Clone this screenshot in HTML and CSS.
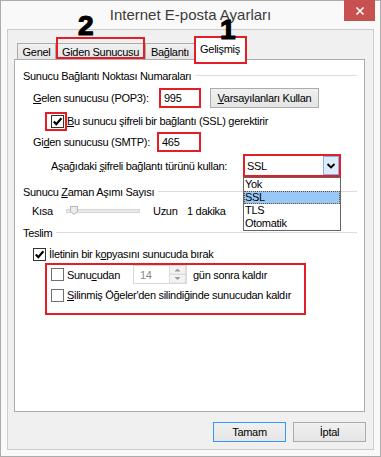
FILE: index.html
```html
<!DOCTYPE html>
<html lang="tr">

<head>
    <meta charset="UTF-8" />
    <title>Internet E-posta Ayarları</title>
    <link rel="stylesheet" href="styles.css">
</head>

<body>
    <div class="window">
        <div class="titlebar">
            <span class="title">Internet E-posta Ayarları</span>
            <span class="close">
                <svg width="10" height="10" viewBox="0 0 10 10"><path d="M1.5 1.5 L8.5 8.5 M8.5 1.5 L1.5 8.5" stroke="#fff" stroke-width="1.6" fill="none"/></svg>
            </span>
        </div>

        <div class="client">
            <div class="tabs">
                <div class="tab tab-genel">Genel</div>
                <div class="tab tab-giden">Giden Sunucusu</div>
                <div class="tab tab-baglanti">Bağlantı</div>
                <div class="tab tab-gelismis active">Gelişmiş</div>
            </div>

            <div class="panel">
                <div class="gtitle"><span>Sunucu Bağlantı Noktası Numaraları</span></div>

                <div class="row row-port">
                    <span class="lbl"><u>G</u>elen sunucusu (POP3):</span>
                    <span class="port">995</span>
                    <span class="btn btn-defaults"><span><u>V</u>arsayılanları Kullan</span></span>
                </div>

                <div class="row row-check">
                    <span class="cb checked cb-marked">
                        <svg width="11" height="11" viewBox="0 0 11 11"><path d="M1.8 5.6 L4.3 8.2 L9.4 2.2" stroke="#000" stroke-width="2.2" fill="none"/></svg>
                    </span>
                    <span class="cb-text"><u>B</u>u sunucu şifreli bir bağlantı (SSL) gerektirir</span>
                </div>

                <div class="row row-smtp">
                    <span class="lbl lbl-short">Gi<u>d</u>en sunucusu (SMTP):</span>
                    <span class="port port-wide">465</span>
                </div>

                <div class="row row-combo">
                    <span class="lbl lbl-combo">Aşağıdaki <u>ş</u>ifreli bağlantı türünü kullan:</span>
                    <span class="combo">
                        <span class="combo-val">SSL</span>
                        <span class="combo-btn">
                            <svg width="14" height="17" viewBox="0 0 14 17"><path d="M3.5 7 L7 10.5 L10.5 7" stroke="#000" stroke-width="1.8" fill="none"/></svg>
                        </span>
                        <span class="combo-list">
                            <span class="opt">Yok</span>
                            <span class="opt selected">SSL</span>
                            <span class="opt">TLS</span>
                            <span class="opt">Otomatik</span>
                        </span>
                    </span>
                </div>

                <div class="gtitle gtitle-2"><span>Sunucu <u>Z</u>aman Aşımı Sayısı</span></div>

                <div class="row row-slider">
                    <span class="kisa">Kısa</span>
                    <svg width="74" height="10" viewBox="0 0 74 10">
                        <rect x="0.5" y="3.5" width="73" height="3" fill="#e7eaea" stroke="#d6d6d6"/>
                        <polygon points="4.5,0.5 11.5,0.5 11.5,5.5 8,8.5 4.5,5.5" fill="#ececec" stroke="#b4b4b4"/>
                    </svg>
                    <span class="uzun">Uzun</span>
                    <span>1 dakika</span>
                </div>

                <div class="gtitle gtitle-3"><span>Teslim</span></div>

                <div class="row row-keep">
                    <span class="cb checked">
                        <svg width="11" height="11" viewBox="0 0 11 11"><path d="M1.8 5.6 L4.3 8.2 L9.4 2.2" stroke="#000" stroke-width="2.2" fill="none"/></svg>
                    </span>
                    <span class="cb-text">İletinin bir k<u>o</u>pyasını sunucuda bırak</span>
                </div>

                <div class="keep">
                    <div class="row sub-row">
                        <span class="cb"></span>
                        <span class="cb-text lbl-days">Sunu<u>c</u>udan</span>
                        <span class="spin">
                            <span class="spin-val">14</span>
                            <svg width="17" height="19" viewBox="0 0 17 19">
                                <rect x="0.5" y="0.5" width="16" height="8.5" fill="#f3f3f3" stroke="#dcdcdc"/>
                                <rect x="0.5" y="9.5" width="16" height="8.5" fill="#f3f3f3" stroke="#dcdcdc"/>
                                <polygon points="5.5,6.5 11.5,6.5 8.5,3.5" fill="#9a9a9a"/>
                                <polygon points="5.5,12 11.5,12 8.5,15" fill="#9a9a9a"/>
                            </svg>
                        </span>
                        <span class="days-after">gün sonra kaldır</span>
                    </div>
                    <div class="row sub-row-2">
                        <span class="cb"></span>
                        <span class="cb-text"><u>S</u>ilinmiş Öğeler'den silindiğinde sunucudan kaldır</span>
                    </div>
                </div>
            </div>

            <div class="buttons">
                <span class="btn btn-ok">Tamam</span>
                <span class="btn">İptal</span>
            </div>
        </div>

        <span class="num num-2">2</span>
        <span class="num num-1">1</span>
    </div>
</body>

</html>
```

FILE: styles.css
```css
body {
    margin: 0;
    font-family: "Liberation Sans", Arial, sans-serif;
    font-size: 11px;
    letter-spacing: -0.3px;
    color: #000;
}

u {
    text-decoration: underline;
    text-underline-offset: 1px;
}

/* Pencere */
.window {
    position: relative;
    width: 381px;
    height: 457px;
    box-sizing: border-box;
    border: 1px solid #acacac;
    background: #f9f9f9;
    display: flex;
    flex-direction: column;
}

.titlebar {
    height: 28px;
    flex: none;
    display: grid;
    grid-template-columns: 1fr auto 1fr;
    align-items: start;
}

.title {
    grid-column: 2;
    font-size: 15px;
    letter-spacing: 0;
    line-height: 28px;
    color: #3c3c3c;
}

.close {
    grid-column: 3;
    justify-self: end;
    margin: -1px 5px 0 0;
    width: 31px;
    height: 21px;
    background: #c75050;
    display: flex;
    align-items: center;
    justify-content: center;
}

.client {
    flex: 1;
    margin: 0 6px 6px;
    border: 1px solid #cbcbcb;
    background: #f0f0f0;
    padding: 0 7px 0 6px;
    display: flex;
    flex-direction: column;
}

/* Sekmeler */
.tabs {
    height: 29px;
    flex: none;
    display: flex;
    align-items: flex-end;
    padding-left: 3px;
}

.tab {
    position: relative;
    height: 16px;
    box-sizing: border-box;
    border: 1px solid #acacac;
    border-bottom: none;
    background: linear-gradient(#f0f0f0, #e5e5e5);
    display: flex;
    align-items: center;
    justify-content: center;
}

.tab + .tab {
    margin-left: -1px;
}

.tab-genel { width: 39px; }
.tab-giden { width: 91px; }
.tab-baglanti { width: 50px; }

.tab.active {
    width: 52px;
    height: 23px;
    margin-bottom: -1px;
    background: #fff;
    z-index: 1;
}

/* Kırmızı işaretler */
.tab-giden::after,
.tab-gelismis::after,
.cb-marked::after {
    content: "";
    position: absolute;
    border: 2px solid #e31e26;
}

.tab-giden::after {
    top: -7px;
    left: 0;
    right: 0;
    bottom: 0;
}

.tab-gelismis::after {
    top: -2px;
    left: -1px;
    right: -2px;
    bottom: -4px;
}

.cb-marked::after {
    top: -4px;
    left: -7px;
    right: -4px;
    bottom: -4px;
}

.num {
    position: absolute;
    font-size: 28px;
    font-weight: 900;
    line-height: 28px;
    letter-spacing: 0;
    color: #000;
    -webkit-text-stroke: 1.2px #000;
    z-index: 3;
}

.num-2 { left: 77px; top: 11px; }
.num-1 { left: 219px; top: 15px; }

/* Panel */
.panel {
    height: 353px;
    flex: none;
    box-sizing: border-box;
    margin-right: 1px;
    border: 1px solid #acacac;
    background: #fff;
    padding: 8px 7px 0 8px;
}

.gtitle {
    display: flex;
    align-items: center;
    height: 15px;
}

.gtitle::after {
    content: "";
    flex: 1;
    margin-left: 4px;
    border-top: 1px solid #dcdcdc;
}

.gtitle-2 { margin-top: 7px; }
.gtitle-3 { margin-top: 7px; }

.row {
    display: flex;
    align-items: center;
}

.row-port {
    height: 21px;
    margin-top: 4px;
    padding-left: 10px;
}

.lbl { width: 126px; flex: none; }
.lbl-short { width: 124px; }
.lbl-combo { width: 192px; }

.port {
    width: 42px;
    height: 20px;
    box-sizing: border-box;
    border: 2px solid #e31e26;
    padding-left: 3px;
    display: flex;
    align-items: center;
    background: #fff;
}

.port-wide { width: 44px; }

.btn {
    width: 73px;
    height: 20px;
    box-sizing: border-box;
    border: 1px solid #acacac;
    background: linear-gradient(#f0f0f0, #e5e5e5);
    display: flex;
    align-items: center;
    justify-content: center;
}

.btn-defaults {
    width: 109px;
    margin-left: 9px;
}

.btn-ok {
    border-color: #3399ff;
}

.row-check {
    height: 16px;
    margin-top: 5px;
    padding-left: 28px;
}

.row-smtp {
    height: 20px;
    margin-top: 3px;
    padding-left: 10px;
}

.row-combo {
    height: 23px;
    margin-top: 2px;
    padding-left: 28px;
}

/* Onay kutuları */
.cb {
    position: relative;
    width: 13px;
    height: 13px;
    flex: none;
    box-sizing: border-box;
    border: 1px solid #707070;
    background: #fff;
    display: flex;
}

.cb.checked {
    border-color: #333;
}

.cb-text {
    margin-left: 3px;
}

/* Açılır liste */
.combo {
    position: relative;
    width: 98px;
    height: 23px;
    box-sizing: border-box;
    border: 2px solid #e31e26;
    background: #fff;
    display: flex;
    align-items: center;
}

.combo-val {
    flex: 1;
    padding-left: 2px;
}

.combo-btn {
    width: 16px;
    height: 19px;
    box-sizing: border-box;
    border: 1px solid #7eb4ea;
    background: #dcecfc;
    display: flex;
    align-items: center;
    justify-content: center;
}

.combo-list {
    position: absolute;
    top: calc(100% + 2px);
    left: -2px;
    width: 98px;
    box-sizing: border-box;
    border: 1px solid #646464;
    background: #fff;
    display: flex;
    flex-direction: column;
    z-index: 2;
}

.opt {
    height: 13px;
    line-height: 13px;
    padding-left: 1px;
    box-sizing: border-box;
}

.opt.selected {
    background: #99c8f8;
    outline: 1px dotted #6b4f2a;
    outline-offset: -1px;
}

/* Zaman aşımı */
.row-slider {
    height: 15px;
    margin-top: 4px;
    padding-left: 9px;
}

.kisa { width: 34px; }

.uzun {
    width: 34px;
    margin-left: 13px;
}

/* Teslim */
.row-keep {
    height: 16px;
    margin-top: 6px;
    padding-left: 10px;
}

.keep {
    margin: 1px 0 0 22px;
    width: 261px;
    box-sizing: border-box;
    border: 2px solid #e31e26;
    padding: 0 0 10px 4px;
}

.sub-row { height: 19px; }

.sub-row-2 {
    height: 16px;
    margin-top: 3px;
}

.lbl-days { width: 66px; }

.spin {
    width: 54px;
    height: 19px;
    box-sizing: border-box;
    border: 1px solid #d9d9d9;
    display: flex;
    align-items: center;
    justify-content: space-between;
    color: #8a8a8a;
}

.spin-val { padding-left: 6px; }

.days-after { margin-left: 6px; }

/* Alt düğmeler */
.buttons {
    display: flex;
    justify-content: flex-end;
    gap: 7px;
    padding-top: 10px;
}
```
